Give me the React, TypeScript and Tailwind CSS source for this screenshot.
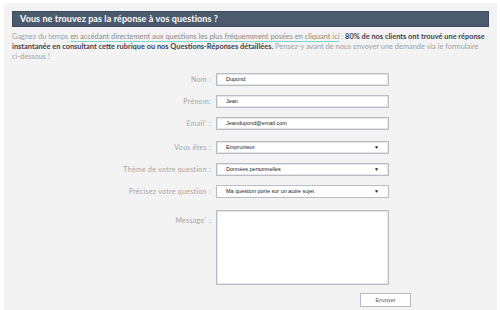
import React from 'react';

const labelCls =
  'w-[216px] shrink-0 pr-[5px] text-right text-[7px] text-[#a3a3a3] tracking-[0.3px]';
const boxCls =
  'flex h-[13px] w-[173px] items-center border border-[#b9bcc4] bg-white px-[9px] text-[5.5px] text-[#222] font-["Liberation_Sans",Arial,sans-serif] shadow-[inset_0_0_0_1px_#e4e6ea]';

function Field({ label, children, star }: { label: string; children: React.ReactNode; star?: boolean }) {
  return (
    <div className="flex items-center">
      <div className={labelCls}>
        {label}
        {star && <sup className="text-[5px]">*</sup>}
        {label === 'Prénom' ? ':' : ' :'}
      </div>
      {children}
    </div>
  );
}

function Select({ value, accent }: { value: string; accent?: boolean }) {
  return (
    <div className={`${boxCls} justify-between ${accent ? 'border-[#7fd8d0] shadow-none' : ''}`}>
      <span>{value}</span>
      <span className="text-[5px] leading-none">▼</span>
    </div>
  );
}

export default function App() {
  return (
    <div className="h-[310px] w-[500px] overflow-hidden bg-white pl-[4px] pt-[3px] font-['Lato','Open_Sans',sans-serif]">
      <div className="h-[310px] w-[493px] bg-[#f3f3f3] px-[8px] pt-[8px]">
        <div className="flex h-[16px] w-[477px] items-center border border-[#3d4b5e] bg-[#4c5a6d] pl-[7px] text-[9px] font-bold tracking-[0.1px] text-white">
          Vous ne trouvez pas la réponse à vos questions ?
        </div>
        <div className="mt-[5px] w-[478px] text-[7.4px] leading-[10px] text-[#9f9f9f]">
          <div>
            Gagnez du temps{' '}
            <a className="text-[#8a8a8a] underline decoration-[#7fd8d0] underline-offset-[1.5px]">
              en accédant directement aux questions les plus fréquemment posées en cliquant ici
            </a>{' '}
            : <b className="text-[#3c4250]">80% de nos clients ont trouvé une réponse</b>
          </div>
          <div>
            <b className="text-[#3c4250]">
              instantanée en consultant cette rubrique ou nos Questions-Réponses détaillées.
            </b>{' '}
            Pensez-y avant de nous envoyer une demande via le formulaire
          </div>
          <div>ci-dessous !</div>
        </div>

        <div className="ml-[-12px] mt-[11px] flex flex-col gap-[9px]">
          <Field label="Nom">
            <div className={boxCls}>Dupond</div>
          </Field>
          <Field label="Prénom">
            <div className={boxCls}>Jean</div>
          </Field>
          <Field label="Email" star>
            <div className={boxCls}>Jeandupond@email.com</div>
          </Field>
          <div className="mt-[2px] flex flex-col gap-[9px]">
            <Field label="Vous êtes">
              <Select value="Emprunteur" />
            </Field>
            <Field label="Thème de votre question">
              <Select value="Données personnelles" />
            </Field>
            <Field label="Précisez votre question">
              <Select value="Ma question porte sur un autre sujet" accent />
            </Field>
          </div>
          <div className="mt-[3px] flex items-start">
            <div className={`${labelCls} pt-[5px]`}>
              Message<sup className="text-[5px]">*</sup> :
            </div>
            <div className="h-[75px] w-[173px] border border-[#b9bcc4] bg-white shadow-[inset_0_0_0_1px_#e4e6ea]" />
          </div>
          <div className="ml-[360px] mt-[-1px] flex h-[14px] w-[51px] items-center justify-center border border-[#b9bcc4] bg-white text-[5.5px] text-[#555] font-['Liberation_Sans',Arial,sans-serif]">
            Envoyer
          </div>
        </div>
      </div>
    </div>
  );
}
